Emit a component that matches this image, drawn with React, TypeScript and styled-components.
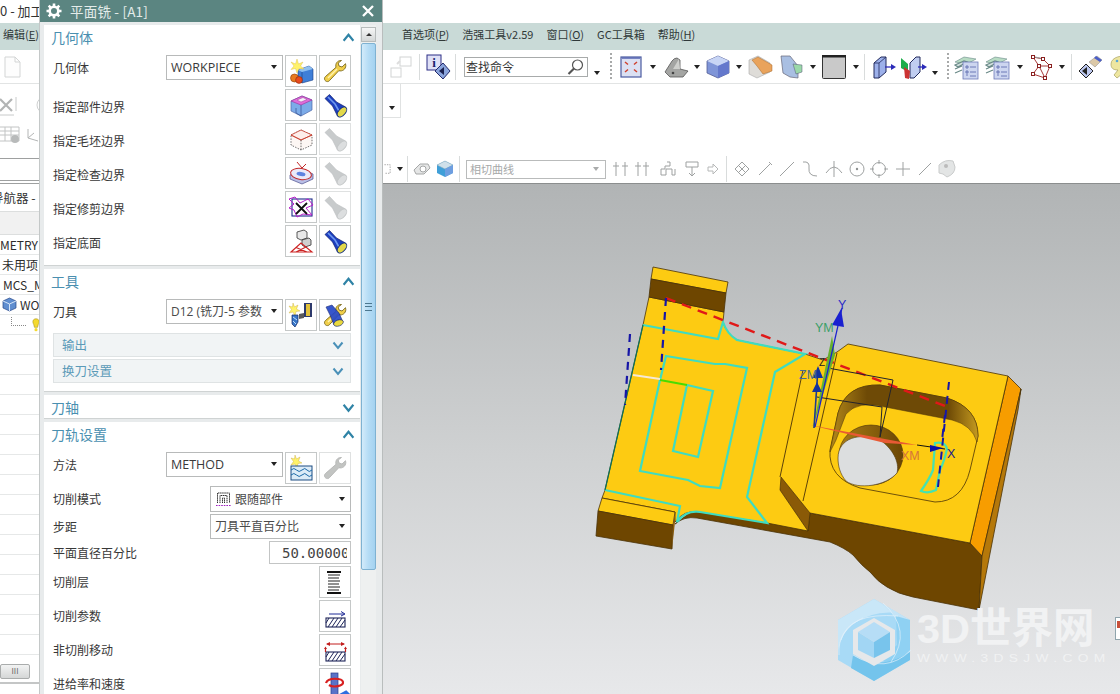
import React from "react";
import styled, { createGlobalStyle } from "styled-components";

const Global = createGlobalStyle`
  html, body { margin: 0; padding: 0; width: 1120px; height: 694px; overflow: hidden; background: #fff; }
  body { font-family: "Noto Sans CJK SC", "Noto Sans", sans-serif; color: #333; }
  * { box-sizing: border-box; }
`;

const Page = styled.div`position: relative; width: 1120px; height: 694px; overflow: hidden; display: flex; flex-direction: column; background: #fff;`;
const TitleBar = styled.div`height: 23px; flex: none; font-size: 13px; line-height: 21px; color: #333; white-space: nowrap; overflow: hidden;`;
const MenuBar = styled.div`height: 27px; flex: none; background: #c9dad7; display: flex; align-items: center; padding: 0 0 5px 3px; font-size: 11px; color: #303838; white-space: nowrap;`;
const MenuGroup = styled.div`display: flex; gap: 13px; margin-left: 363px;`;
const MenuItem = styled.span`
  u { text-underline-offset: 1px; }
`;
const ToolBar = styled.div`height: 34px; flex: none; display: flex; align-items: center; border-bottom: 1px solid #e2e4e4; overflow: hidden;`;
const Slot = styled.div<{ $w: number }>`flex: none; width: ${(p) => p.$w}px; height: 28px; display: flex; align-items: center; justify-content: center; overflow: visible;`;
const Sep = styled.div`flex: none; width: 1px; height: 26px; background: #d9dcdc;`;
const Grip = styled.div<{ $w: number }>`flex: none; width: ${(p) => p.$w}px; height: 28px; display: flex; justify-content: center;
  &::before { content: ""; width: 2px; height: 100%; background: repeating-linear-gradient(to bottom, #a8aaaa 0 2px, transparent 2px 4px); }
`;
const Caret = styled.i`display: block; flex: none; width: 0; height: 0; border-left: 3.5px solid transparent; border-right: 3.5px solid transparent; border-top: 4px solid #222;`;
const LowCaret = styled(Caret)`margin-top: 13px;`;
const SearchBox = styled.div`flex: none; margin-left: 8px; width: 124px; height: 20px; border: 1px solid #a8abab; display: flex; align-items: center; justify-content: space-between; padding: 0 2px 0 1px; font-size: 12px; color: #333;`;
const Ribbon = styled.div`height: 99px; flex: none; display: flex;`;
const RibbonLeft = styled.div`width: 383px; flex: none; display: flex; flex-direction: column; padding-top: 6px;`;
const LeftRow = styled.div`height: 30px; flex: none; display: flex; align-items: center; gap: 4px;`;
const LeftField = styled.div`margin-top: 8px; height: 23px; border-top: 1px solid #9ea0a0; border-bottom: 1px solid #9ea0a0;`;
const RibbonRight = styled.div`flex: 1; display: flex; flex-direction: column; justify-content: space-between;`;
const OverflowBox = styled.div`width: 18px; height: 34px; display: flex; align-items: center; justify-content: center; padding-top: 14px; border-right: 1px solid #e0e2e2; border-bottom: 1px solid #e0e2e2;`;
const FilterBar = styled.div`height: 28px; display: flex; align-items: center;`;
const FilterSelect = styled.div`flex: none; margin-left: 6px; width: 140px; height: 19px; border: 1px solid #b9bbbb; display: flex; align-items: center; justify-content: space-between; padding: 0 6px 0 3px; font-size: 11px; color: #a6a8a8;`;
const GreyCaret = styled(Caret)`border-top-color: #a9abab;`;

const Work = styled.div`flex: 1; display: flex; min-height: 0;`;
const Nav = styled.div`width: 383px; flex: none; display: flex; flex-direction: column; overflow: hidden; border-top: 1px solid #9ea0a0;`;
const NavHead = styled.div`height: 28px; flex: none; font-size: 12.5px; line-height: 28px; border-bottom: 1px solid #dcdede; white-space: nowrap;
  span { margin-left: -9px; display: inline-block; }
`;
const NavCols = styled.div`height: 23px; flex: none; background: #f1f1f1; border-bottom: 1px solid #dcdede;`;
const NavRow = styled.div<{ $pl?: number }>`height: 20px; flex: none; border-bottom: 1px solid #e6e8e8; font-size: 12px; line-height: 19px; display: flex; align-items: center; white-space: nowrap; padding-left: ${(p) => p.$pl ?? 2}px; gap: 3px; color: #2c2c2c;`;
const DotLink = styled.i`display: block; margin-left: 9px; width: 15px; height: 9px; margin-top: -6px; border-left: 1px dotted #888; border-bottom: 1px dotted #888;`;
const HScroll = styled.div`margin-top: 9px; width: 30px; height: 15px; flex: none; border: 1px solid #a9acac; border-radius: 2px; background: linear-gradient(#f2f3f3, #d5d7d7); font-size: 8px; line-height: 12px; text-align: center; color: #666;`;
const NavFoot = styled.div`margin-top: 3px; height: 2px; flex: none; background: #c4c6c6;`;

const Viewport = styled.div`position: relative; flex: 1; border-top: 1px solid #8b8e8e; background: linear-gradient(#b1b4b5 0%, #d0d2d3 55%, #e7e8ea 100%); overflow: hidden;`;
const ModelCanvas = styled.svg`display: block; width: 100%; height: 100%;`;
const Watermark = styled.div`position: absolute; left: 450px; top: 415px; display: flex; gap: 2px; align-items: flex-start; pointer-events: none;`;
const MarkText = styled.div`display: flex; flex-direction: column; padding-top: 7px;`;
const MarkBig = styled.div`font-family: "Liberation Sans", "Noto Sans CJK SC", sans-serif; font-weight: 700; font-size: 41.5px; line-height: 46px; color: #f1f2f3; white-space: nowrap;`;
const MarkSmall = styled.div`font-family: "Liberation Sans", sans-serif; font-size: 11px; line-height: 12px; letter-spacing: 4.3px; color: #f1f2f3; white-space: nowrap; transform: scaleX(1.25); transform-origin: left center;`;
const EdgeThumb = styled.div`position: absolute; right: -3px; top: 433px; width: 8px; height: 23px; background: #fff; border: 1px solid #8fa4ac; &::after { content: ""; display: block; margin: 3px 0 0 1px; width: 5px; height: 7px; background: #c8503a; }`;

const Panel = styled.div`position: absolute; left: 39px; top: 0; width: 344px; height: 694px; background: #e8ebec; display: flex; flex-direction: column; overflow: hidden; border-right: 1px solid #b9bdbd; border-left: 1px solid #c4c8c8;`;
const PanelHead = styled.div`height: 22px; flex: none; background: #5b8581; color: #e4ecea; display: flex; align-items: center; padding: 0 7px 0 6px; font-size: 13.5px; gap: 8px;`;
const PanelTitle = styled.div`flex: 1; letter-spacing: 0.2px;`;
const PanelBody = styled.div`flex: 1; min-height: 0; display: flex; padding: 3px 6px 0 4px; gap: 1px;`;
const Sections = styled.div`width: 316px; flex: none; display: flex; flex-direction: column; gap: 4px;`;
const Section = styled.section<{ $pb?: number }>`background: #fff; box-shadow: 0 1px 0 #cfd3d3; padding-bottom: ${(p) => p.$pb ?? 0}px; flex: none;`;
const SecHead = styled.div<{ $h?: number }>`height: ${(p) => p.$h ?? 30}px; display: flex; align-items: flex-start; justify-content: space-between; padding: 0 5px 0 7px; color: #4a8fb0; font-size: 14px; line-height: 24px;
  svg { margin-top: 6px; }
`;
const Rows = styled.div`display: flex; flex-direction: column; gap: 2px; padding: 0 9px;`;
const Row = styled.div`display: flex; align-items: flex-start;`;
const Label = styled.div<{ $mt?: number; $lh?: number }>`flex: 1; font-size: 12px; line-height: ${(p) => p.$lh ?? 25}px; color: #383838; margin-top: ${(p) => p.$mt ?? 0}px; white-space: nowrap;`;
const Combo = styled.div<{ $w: number; $h?: number }>`flex: none; width: ${(p) => p.$w}px; height: ${(p) => p.$h ?? 25}px; border: 1px solid #b8baba; display: flex; align-items: center; justify-content: space-between; padding: 0 5px 1px 4px; font-family: "Open Sans", "Noto Sans CJK SC", sans-serif; font-size: 12.5px; color: #3a3a3a; white-space: nowrap; overflow: hidden; background: #fff;`;
const ComboText = styled.span`display: flex; align-items: center; gap: 3px; font-size: 12px; color: #4a4a4a; overflow: hidden;`;
const NumField = styled.div`flex: none; width: 82px; height: 23px; border: 1px solid #c3c5c5; padding: 0 3px 0 12px; font-family: "DejaVu Sans Mono", monospace; font-size: 14px; line-height: 22px; color: #444;`;
const NumText = styled.div`overflow: hidden; white-space: nowrap;`;
const IconBtn = styled.div<{ $faded?: boolean }>`flex: none; width: 32px; height: 32px; margin-left: 2px; border: 1px solid ${(p) => (p.$faded ? "#dfe1e1" : "#c5c8c8")}; background: #fff; display: flex; align-items: center; justify-content: center;`;
const Sub = styled.div`margin: 2px 9px 0; height: 24px; background: #f1f4f5; border: 1px solid #dfe3e4; display: flex; align-items: center; justify-content: space-between; padding: 0 6px 1px 8px; color: #5b9ab8; font-size: 12.5px;`;
const ScrollTrack = styled.div`width: 15px; flex: none; display: flex; flex-direction: column; gap: 1px; padding-top: 2px; background: #eef0f0;`;
const ScrollBtn = styled.div`height: 15px; flex: none; border: 1px solid #b7bcbc; background: linear-gradient(#f6f7f7, #d3d6d6); display: flex; align-items: center; justify-content: center; &::before { content: ""; border-left: 3px solid transparent; border-right: 3px solid transparent; border-bottom: 3px solid #333; }`;
const ScrollThumb = styled.div`height: 527px; flex: none; border: 1px solid #7fb2d2; border-radius: 2px; background: linear-gradient(to right, #d3ebfa, #b5dcf5 50%, #a4d2f0); display: flex; align-items: center; justify-content: center; &::before { content: ""; width: 7px; height: 6px; border-top: 1px solid #4d7890; border-bottom: 1px solid #4d7890; background: linear-gradient(#4d7890,#4d7890) center/100% 1px no-repeat; }`;

type GProps = { s?: number; children?: React.ReactNode; view?: string };
const Glyph = styled.svg`display: block; flex: none; overflow: visible;`;
const G = ({ s = 26, view = "0 0 26 26", children }: GProps) => (
  <Glyph width={s} height={s} viewBox={view} fill="none">{children}</Glyph>
);

const Chevron = ({ up, color = "#2f83a6", s = 13, w = 2 }: { up?: boolean; color?: string; s?: number; w?: number }) => (
  <G s={s} view="0 0 12 12">
    <path d={up ? "M1.5 9 L6 3.5 L10.5 9" : "M1.5 3.5 L6 9 L10.5 3.5"} stroke={color} strokeWidth={w} />
  </G>
);
const Wrench = ({ gray, dual }: { gray?: boolean; dual?: boolean }) => (
  <G>
    <path d="M19 2.5c-3.5 0-6 3-5 6.8L3.4 18.6c-1.9 1.7-.6 5 2 5 .8 0 1.5-.3 2-.9L16.800 12.700c3.600 1 7-1.500 7-5.200 0-.7-.1-1.200-.3-1.800L20 9l-3-1-.8-3 3.300-2.500z"
      fill={gray ? "#c2c4c2" : "#f1cf4a"} stroke={gray ? "#b5b7b5" : "#7a6a20"} strokeWidth="0.9" />
    {!gray && <path d="M6 20 L15 11" stroke="#fff3b0" strokeWidth="1.4" />}
    {dual && <path d="M4 5 L10 3 L17 11 L21 20 L12 23 L8 13Z" fill="#2648c8" stroke="#10206a" strokeWidth=".6" opacity=".92" />}
    {dual && <ellipse cx="16.500" cy="21" rx="5" ry="3" transform="rotate(-20 16.500 21)" fill="#ead93e" stroke="#10206a" strokeWidth=".6" />}
  </G>
);
const Torch = ({ gray }: { gray?: boolean }) => (
  <G>
    <path d="M3 6.500 L7.500 2.500 L14.500 10 L23.500 15 L15.500 24 L10.500 14Z" fill={gray ? "#c8cbcc" : "#1c3fc0"} stroke={gray ? "#bfc2c3" : "#101e6c"} strokeWidth=".7" />
    {!gray && <path d="M6 5 L13 12 L17 19" stroke="#6f98ee" strokeWidth="1.6" />}
    <ellipse cx="20" cy="20" rx="6" ry="3.400" transform="rotate(-48 20 20)" fill={gray ? "#dcdedf" : "#e2d84a"} stroke={gray ? "#c4c7c8" : "#15307e"} strokeWidth="1" />
  </G>
);
const IcoNew = () => (
  <G>
    <path d="M10 12 L21 8 L25 11 L25 22 L14 25 L10 22Z" fill="#3f7fd8" stroke="#1a3e84" strokeWidth=".6" />
    <path d="M10 12 L21 8 L25 11 L14 14Z" fill="#8fc0f0" />
    <path d="M14 14 L14 25" stroke="#1a3e84" strokeWidth=".6" />
    <path d="M9 1 L10.500 6 L15 4 L12.500 8 L16 11 L11 10.500 L9 15 L7.500 10.500 L3 11.500 L6 8 L3 4 L7.500 6Z" fill="#fff26a" stroke="#d8b840" strokeWidth=".4" />
    <circle cx="6.500" cy="20" r="4" fill="#e8791e" stroke="#8a3a08" strokeWidth=".6" />
    <circle cx="11" cy="22" r="3.400" fill="#e84a1e" stroke="#8a2a08" strokeWidth=".6" />
  </G>
);
const IcoPart = () => (
  <G>
    <path d="M3 9 L14 4 L24 8 L24 18 L13 24 L3 19Z" fill="#7cabe8" stroke="#4f68a8" strokeWidth=".7" />
    <path d="M3 9 L14 4 L24 8 L13 13Z" fill="#e06cd8" stroke="#a03aa0" strokeWidth=".7" />
    <path d="M9 8 L15 5.500 L19 7.500 L13 10Z" fill="#f3f0f8" stroke="#a03aa0" strokeWidth=".5" />
    <path d="M13 13 L13 24 M8 16 L8 21 L13 24" stroke="#3c5a9c" strokeWidth=".8" />
  </G>
);
const IcoBlank = () => (
  <G>
    <path d="M3 9 L13 4 L24 9 L24 19 L13 24 L3 19Z" fill="#fdf7f4" stroke="#333" strokeWidth=".7" strokeDasharray="1.500 1.300" />
    <path d="M3 9 L13 4 L24 9 L13 14Z M13 14 L3 9 M13 14 L24 9" fill="#fdeeea" stroke="#c83c2c" strokeWidth=".8" />
    <path d="M13 14 L13 24" stroke="#333" strokeWidth=".7" strokeDasharray="1.500 1.300" />
  </G>
);
const IcoCheck = () => (
  <G>
    <path d="M2 15 L13 9 L25 14 L25 19 L14 24 L2 19Z" fill="#b9bfe6" stroke="#4c4f8c" strokeWidth=".7" />
    <ellipse cx="13" cy="14" rx="10.500" ry="5.500" transform="rotate(8 13 14)" fill="#e9e9f8" stroke="#c22828" strokeWidth="1" />
    <ellipse cx="13" cy="14" rx="4.500" ry="2" transform="rotate(8 13 14)" fill="#5d83e0" />
    <path d="M9 2 L14 8 M18 4 L14 8" stroke="#c22828" strokeWidth="1" />
  </G>
);
const IcoTrim = () => (
  <G>
    <rect x="4" y="5" width="20" height="17" fill="#fff" stroke="#1d2a8a" strokeWidth="1.100" />
    <path d="M1 5 L7 3 L12 9 L20 5 L25 11 L18 14 L24 21 L15 20 L9 23 L6 16 L1 14 L6 10Z" fill="none" stroke="#b61cc8" strokeWidth="1" />
    <path d="M8 9 L19 20 M19 9 L8 20" stroke="#111" strokeWidth="1.800" />
  </G>
);
const IcoFloor = () => (
  <G>
    <path d="M9 4 L16 2 L19 4 L19 10 L13 12 L9 10Z" fill="#e8e8e8" stroke="#333" strokeWidth=".8" />
    <path d="M14 12 L21 10 L23 12 L23 17 L17 19 L14 17Z" fill="#cfcfcf" stroke="#333" strokeWidth=".8" />
    <path d="M3 24 L13 15 L24 24Z M3 24 L24 24 M8 19.500 L19 24 M18 19 L8 24" stroke="#cc2323" strokeWidth="1.100" />
  </G>
);
const IcoTool = () => (
  <G>
    <path d="M5 1 L6.500 5 L10 3 L8.500 7 L12 9 L8 9.500 L7 14 L5 10 L1 11 L3.500 7.500 L1 4 L4.500 5Z" fill="#fff26a" stroke="#c7a63a" strokeWidth=".4" />
    <rect x="16" y="1" width="8" height="14" fill="#2d3a6c" />
    <rect x="18" y="2" width="4" height="12" fill="#e2c23a" />
    <path d="M4 13 L10 13 L10 20 L7 25 L4 22Z" fill="#3876c8" stroke="#142a66" strokeWidth=".7" />
    <path d="M5 15 L9 18 M5 19 L8 22" stroke="#cde6ff" strokeWidth=".9" />
    <path d="M11 12 L16 11 L16 16 L11 17Z" fill="#5a5a5a" />
  </G>
);
const IcoMethod = () => (
  <G>
    <path d="M7 0 L8.500 4 L12 2 L10.500 6 L14 8 L10 8.500 L9 13 L7 9 L3 10 L5.500 6.500 L3 3 L6.500 4Z" fill="#fff26a" stroke="#c7a63a" strokeWidth=".4" />
    <rect x="3" y="11" width="21" height="14" fill="#dcebf7" stroke="#1c4d82" strokeWidth="1" />
    <path d="M3 15 Q6 12 8.500 15 T14 15 T19 15 T24 15 M3 20 Q6 17 8.500 20 T14 20 T19 20 T24 20" stroke="#1c6aa8" strokeWidth="1" fill="none" />
  </G>
);
const IcoLevels = () => (
  <G>
    {[6, 9, 12, 15, 18, 21].map((y) => <path key={y} d={`M6 ${y} H${y % 2 ? 17 : 18}`} stroke="#222" strokeWidth="1" />)}
    <path d="M5 3 H19 M5 24 H19" stroke="#111" strokeWidth="1.800" />
  </G>
);
const Hatch = () => (
  <>
    <rect x="4" y="15" width="19" height="9" fill="#fff" stroke="#1d2458" strokeWidth="1.100" />
    <path d="M6 24 L12 15 M10 24 L16 15 M14 24 L20 15 M18 24 L23 17 M4 20 L7 15" stroke="#1d2458" strokeWidth="1" />
  </>
);
const IcoParams = () => (
  <G>
    <Hatch />
    <path d="M7 11 H22 M19 8.500 L23 11 L19 13" stroke="#1e2a96" strokeWidth="1" fill="none" />
  </G>
);
const IcoMove = () => (
  <G>
    <Hatch />
    <path d="M5 7 H22" stroke="#c21f1f" strokeWidth="1" />
    <path d="M8 5 L4 7 L8 9Z M19 5 L23 7 L19 9Z" fill="#c21f1f" />
    <path d="M3.500 15 V11 M23.500 15 V11" stroke="#c21f1f" strokeWidth="1.200" />
    <path d="M3.500 9.500 L2 12 H5Z M23.500 9.500 L22 12 H25Z" fill="#c21f1f" />
  </G>
);
const IcoFeed = () => (
  <G>
    <rect x="9" y="2" width="7" height="23" fill="#5a73c8" stroke="#2b3c8c" strokeWidth=".7" />
    <path d="M4 12 C6 6 20 7 21 11 C22 15 11 17 7 14" stroke="#d82020" strokeWidth="2.200" fill="none" />
    <path d="M15 26 L24 21 L27 24" stroke="#2f6ee0" strokeWidth="3" fill="none" />
  </G>
);
const IcoGear = () => (
  <G s={16} view="0 0 16 16">
    <circle cx="8" cy="8" r="4.300" stroke="#fff" strokeWidth="2.600" />
    <path d="M8 .5 V3 M8 13 V15.500 M.5 8 H3 M13 8 H15.500 M2.700 2.700 L4.500 4.500 M11.500 11.500 L13.300 13.300 M13.300 2.700 L11.500 4.500 M4.500 11.500 L2.700 13.300" stroke="#fff" strokeWidth="2.600" />
  </G>
);
const IcoClose = () => (
  <G s={14} view="0 0 14 14"><path d="M2 2 L12 12 M12 2 L2 12" stroke="#fff" strokeWidth="2.300" /></G>
);
const IcoFollow = () => (
  <G s={17} view="0 0 17 17">
    <path d="M2.500 13 V3 H14.500 V13 M5 13 V5.500 H12 V13 M7.500 13 V8 H9.500 V13" stroke="#2c2c2c" strokeWidth="1" strokeDasharray="1.500 .6" />
    <path d="M1 15.500 H16" stroke="#a021c0" strokeWidth="1" strokeDasharray="1.600 1" />
  </G>
);

/* toolbar drawings */
const TSquares = () => (<G s={24} view="0 0 24 24"><rect x="11" y="2" width="11" height="9" fill="#fff" stroke="#d2d4d4" /><rect x="2" y="13" width="10" height="9" fill="#fff" stroke="#d2d4d4" /><path d="M8 9 L11 6" stroke="#ddd" strokeWidth="2" /></G>);
const TInfo = () => (<G s={26}><rect x="2" y="1" width="14" height="15" fill="#dfe0f6" stroke="#2c2f86" /><text x="9" y="13" fontFamily="Liberation Serif" fontWeight="700" fontSize="13" textAnchor="middle" fill="#20236e">i</text><path d="M18 9 L25 17 L18 25 L10 17Z" fill="#8aa4dc" stroke="#232a6c" /><path d="M19 13 L14 17 L19 21Z" fill="#1a2050" /></G>);
const TLens = () => (<G s={18} view="0 0 18 18"><circle cx="10.500" cy="7" r="5" fill="#fff" stroke="#555" strokeWidth="1.200" /><path d="M7 10.500 L1.500 16" stroke="#555" strokeWidth="2.200" /></G>);
const TFit = () => (<G s={24} view="0 0 24 24"><rect x="2" y="2" width="20" height="20" fill="#dbe0f2" stroke="#4a5aa0" strokeWidth="1.200" /><path d="M3 3 H21" stroke="#5665b0" strokeWidth="1.500" /><path d="M6 7 L9 9.500 M18 7 L15 9.500 M6 17 L9 14.500 M18 17 L15 14.500" stroke="#d0402c" strokeWidth="1.500" /></G>);
const TBracket = () => (<G s={26}><path d="M2 18 L9 7 Q11 4 14 4 L17 6 L17 15 L25 17 L20 23 L7 23Z" fill="#a4a5a3" stroke="#555" strokeWidth=".8" /><path d="M10 15 L16 5 L17 15Z" fill="#cfd0cd" /><circle cx="10" cy="19" r="1.300" fill="#444" /></G>);
const TCube = () => (<G s={26}><path d="M2 7 L13 2 L24 7 L24 19 L13 24 L2 19Z" fill="#7f95d8" stroke="#545d94" strokeWidth=".8" /><path d="M2 7 L13 2 L24 7 L13 12Z" fill="#c8d5f5" /><path d="M13 12 L13 24 L24 19 L24 7Z" fill="#6478cc" /></G>);
const TOrange = () => (<G s={26}><path d="M1 6 L10 2 L22 9 L22 18 L9 24 L1 20Z" fill="#dedcd8" stroke="#aaa" strokeWidth=".6" /><path d="M4 6 L10 3 L24 11 L24 17 L15 20 L9 12Z" fill="#e9a35c" stroke="#a86a2c" strokeWidth=".5" /></G>);
const TWedge = () => (<G s={26}><path d="M3 2 L12 2 L20 12 L20 24 L12 23 L5 19Z" fill="#a9bfe2" stroke="#667" strokeWidth=".7" /><path d="M15 10 L24 11 L24 18 L18 20Z" fill="#9ad8a8" stroke="#557" strokeWidth=".5" /></G>);
const TDisplay = () => (<G s={26}><rect x="1.500" y="1.500" width="23" height="23" rx="1" fill="#c9c9c9" stroke="#333" strokeWidth="1" /><rect x="1" y="1" width="24" height="2.500" fill="#222" /></G>);
const TPlate = () => (<G s={26}><path d="M3 9 L10 3 L15 3 L15 18 L8 24 L3 24Z" fill="#9cb0ea" stroke="#222a5c" strokeWidth="1" /><path d="M8 9 L8 24 M3 9 L8 9 L15 3" stroke="#222a5c" strokeWidth=".8" /><path d="M14 13 H22" stroke="#2a2ab8" strokeWidth="1.300" /><path d="M20 10 L25 13 L20 16Z" fill="#2a2ab8" /></G>);
const TPlate2 = () => (<G s={26}><path d="M9 9 L15 3 L19 3 L19 18 L13 24 L9 24Z" fill="#c0cdf0" stroke="#222a5c" strokeWidth="1" /><path d="M0 4 L7 10 L7 18 L0 14Z" fill="#1cae4a" /><path d="M3 13 L9 17 L8 25 L4 24Z" fill="#cc3333" /><path d="M17 13 H23" stroke="#2a2ab8" strokeWidth="1.300" /><path d="M21 10 L26 13 L21 16Z" fill="#2a2ab8" /></G>);
const TLayers = () => (<G s={26}><path d="M1 8 L10 3 L22 5 L13 10Z" fill="#b8dcc4" stroke="#6a8a88" strokeWidth=".6" /><path d="M1 11 L10 7 L13 8 L4 13Z M1 15 L8 12 M1 19 L8 16" stroke="#6a8a88" strokeWidth="1.200" fill="#d4e2e0" /><rect x="9" y="8" width="15" height="17" fill="#cdd6f0" stroke="#6e7cb8" strokeWidth=".8" /><path d="M12 12 h2 v2 h-2z M16 13 h6 M12 17 h2 v2 h-2z M16 18 h6 M12 21 h2 M16 22 h6" stroke="#5362a8" strokeWidth=".8" /></G>);
const TNet = () => (<G s={26}><path d="M5 3 L11 12 L5 20 L17 24 L22 12 L15 5 Z M11 12 L17 24 M11 12 L22 12" stroke="#a83a3a" strokeWidth="1" /><path d="M7 3 L16 5" stroke="#999" />{[[5, 3], [15, 5], [22, 12], [11, 12], [5, 20], [17, 24]].map(([x, y]) => <rect key={`${x}${y}`} x={x - 1.5} y={y - 1.5} width="3" height="3" fill="#fff" stroke="#8a2020" />)}</G>);
const TPen = () => (<G s={26}><path d="M12 8 L20 2 L25 6 L18 13 Z" fill="#dcc9a8" stroke="#888" strokeWidth=".5" /><path d="M19 2 L25 6 L23 8 L17 4Z" fill="#4a5fc8" /><path d="M2 17 L9 10 L16 17 L9 24Z" fill="#bcc7ee" stroke="#222" strokeWidth="1" /><path d="M10 13 L5 17 L10 21Z" fill="#222" /></G>);
const TPalette = () => (<G s={26}><path d="M3 10 C3 3 15 0 21 4 C26 7 23 13 18 12 L14 20 L9 24 L6 21 L10 16 C5 16 3 14 3 10Z" fill="#eee6a0" stroke="#a8a060" strokeWidth=".7" /><circle cx="9" cy="7" r="1.300" fill="#58a8d8" /><circle cx="14" cy="5" r="1.300" fill="#58c878" /></G>);

const F = ({ d, c = "#9ea1a1" }: { d: string; c?: string }) => (
  <G s={18} view="0 0 18 18"><path d={d} stroke={c} strokeWidth="1" fill="none" /></G>
);
const FilterEye = () => (<G s={18} view="0 0 18 18"><path d="M1 10 L7 4 L15 4 L17 8 L11 14 L3 14Z" fill="#e5e6e6" stroke="#a5a7a7" /><circle cx="10" cy="9" r="3" fill="#fff" stroke="#a5a7a7" /></G>);
const FilterCube = () => (<G s={18} view="0 0 18 18"><path d="M1 5 L9 1 L17 5 L17 13 L9 17 L1 13Z" fill="#3f9fd8" /><path d="M1 5 L9 1 L17 5 L9 9Z" fill="#cfe0ea" stroke="#8ab" strokeWidth=".5" /><path d="M9 9 L17 5 L17 13 L9 17Z" fill="#6e9ee0" /></G>);

const Model = () => {
  const brown = "#6e4600";
  const yellow = "#fdcb12";
  const line = "#4a3208";
  return (
    <ModelCanvas viewBox="383 184 737 510" preserveAspectRatio="none">
      <defs>
        <linearGradient id="wall" x1="0" x2="1" y1="0" y2="0">
          <stop offset="0" stopColor="#b58a1a" />
          <stop offset=".25" stopColor="#6e4a06" />
          <stop offset=".8" stopColor="#6e4a06" />
          <stop offset="1" stopColor="#c49a20" />
        </linearGradient>
        <linearGradient id="holeWall" x1="0" x2="1" y1="0" y2="0">
          <stop offset="0" stopColor="#a87c14" />
          <stop offset="1" stopColor="#6b4604" />
        </linearGradient>
      </defs>

      {/* underside of the whole part */}
      <path d="M675 524 Q684 516 697 518 L830 542 Q845 548 853 555 Q862 566 870 572 Q878 582 887 587 Q898 594 913 597 L979 610 L982 556 L970 543 L810 513 L700 505Z" fill={brown} stroke={line} strokeWidth=".8" />
      <path d="M1008 376 L1021 389 L982 556 L970 543Z" fill="#f79d00" stroke={line} strokeWidth=".8" />
      <path d="M1021 389 L1018 410 L979 610 L982 556Z" fill="#b5780a" stroke={line} strokeWidth=".8" />
      {/* top face, one surface */}
      <path d="M649 297 L724 312 L723 322 Q726 333 737 340 L805 354 L823 360 L837 352 L848 344 L1008 376 L970 543 L810 513 L808 531 L767 523 L697 512 Q684 510 675 522 L675 512 L602 498 L605 490 L643 325Z" fill={yellow} stroke={line} strokeWidth=".8" />
      <path d="M803 370 L780 477 M837 353 L803 501" stroke={line} strokeWidth=".9" />
      <path d="M781 477 L810 513 L808 531 L780 490Z" fill="#8a5a07" stroke={line} strokeWidth=".7" />
      {/* upper tab */}
      <path d="M653 267 L728 282 L726 293 L651 279Z" fill={yellow} stroke={line} strokeWidth=".8" />
      <path d="M651 279 L726 293 L724 312 L649 297Z" fill={brown} stroke={line} strokeWidth=".8" />
      {/* lower tab */}
      <path d="M602 498 L675 512 L673 525 L598 511Z" fill={yellow} stroke={line} strokeWidth=".8" />
      <path d="M598 511 L673 525 L672 549 L596 536Z" fill={brown} stroke={line} strokeWidth=".8" />
      <path d="M673 525 L675 513 L675 522 L672 549Z" fill="#8a5a07" />
      {/* pocket */}
      <path d="M880 385 L947 398 Q978 408 978 436 L970 470 Q962 502 935 502 L860 488 Q828 478 830 450 L838 413 Q846 384 880 385Z" fill={yellow} stroke={line} strokeWidth=".8" />
      <path d="M880 385 L947 398 Q978 408 978 436 L977 442 Q972 425 952 420 L885 407 Q858 400 846 414 L836 440 L830 452 L838 413 Q846 384 880 385Z" fill="url(#wall)" stroke={line} strokeWidth=".5" />
      <ellipse cx="871" cy="455" rx="32" ry="30" fill="url(#holeWall)" stroke={line} strokeWidth=".6" />
      <path d="M838 458 C838 438 860 432 880 440 C892 448 900 462 897 473 C886 486 858 490 846 481 C840 474 838 466 838 458Z" fill="#dcdedf" stroke={line} strokeWidth=".6" />

      {/* tool path */}
      <g fill="none" stroke="#3fdcc0" strokeWidth="2.200">
        <path d="M643 325 L718 339 L723 322 Q727 334 737 340 L805 354 L775 372 L747 497 L767 523 L700 512 Q686 510 677 522 L680 506 L605 490" />
        <path d="M666 356 L715 364 L725 364 L747 368 L720 488 L700 486 L688 480 L640 471 L660 380Z" />
        <path d="M687 385 L713 391 L698 457 L673 451Z" />
        <path d="M935 443 Q945 441 947 449 Q944 462 940 470 L936 490 Q928 494 921 491 Q930 478 933 470Z" stroke="#45e2b0" />
      </g>
      <path d="M605 490 L643 325" stroke="#0e7058" strokeWidth="1.200" />
      <path d="M660 380 L687 385" stroke="#49dc00" strokeWidth="2" />
      <path d="M633 375 L660 379" stroke="#f6e9d6" strokeWidth="2" />
      <path d="M666 298 L945 406" stroke="#e01818" strokeWidth="2.400" strokeDasharray="10 7" />
      <path d="M666 298 L661 370 M630 334 L625 405" stroke="#1616a6" strokeWidth="2.200" strokeDasharray="8 6" />
      <path d="M949 382 L938 487 M945 415 L942 440" stroke="#1616a6" strokeWidth="2" strokeDasharray="8 6" />

      {/* csys */}
      <path d="M828 368 L893 380 L880 437 M817 397 L882 407 L880 437" stroke="#23232b" strokeWidth="1" fill="none" />
      <path d="M813 427 L832 336 L835 355Z" fill="#66b030" />
      <path d="M810 425 L917 445 L885 443Z" fill="#e85a34" />
      <path d="M815 427 L842 308" stroke="#1a20d0" strokeWidth="1.200" />
      <path d="M841 309 L832 325 L844 327Z" fill="#1a20d0" />
      <path d="M814 428 L818 368" stroke="#1c3d8c" strokeWidth="1.600" />
      <path d="M818 366 L813 378 L823 378Z M817 382 L812 392 L822 392Z" fill="#14349c" />
      <path d="M917 445 L945 449" stroke="#111" strokeWidth="1" />
      <path d="M930 445 L943 448 L930 452Z" fill="#0c10a8" />
      <g fontFamily="Liberation Sans, sans-serif" fontSize="12.500">
        <text x="838" y="309" fill="#2a2ac8">Y</text>
        <text x="815" y="332" fill="#3a9f68">YM</text>
        <text x="799" y="379" fill="#476a92">ZM</text>
        <text x="819" y="366" fill="#222" fontSize="10">Z</text>
        <text x="901" y="460" fill="#d5763c">XM</text>
        <text x="947" y="458" fill="#20208c">X</text>
      </g>
    </ModelCanvas>
  );
};

const Logo = () => (
  <G s={82} view="833 599 80 82">
    <path d="M873 599 L909 620 L909 660 L873 681 L837 660 L837 620Z" fill="#a8daf6" />
    <path d="M837 620 L873 599 L897 613 Q872 610 852 624 Q840 634 837 650Z" fill="#c9e7f8" />
    <path d="M873 599 L909 620 L909 642 Q905 625 895 617 Q885 606 873 599Z" fill="#c4e4f7" />
    <path d="M895 616 L909 620 L909 650 Q902 662 888 664 L880 660 L896 645 Z" fill="#8fd1f3" />
    <path d="M852 655 Q878 672 909 652 L909 660 L873 681 L850 668Z" fill="#74c4ec" />
    <path d="M840 640 Q848 612 897 616 M882 603 Q912 630 890 662 M910 650 Q885 675 852 655 M838 655 Q836 630 862 618" stroke="#e2f1fb" strokeWidth=".7" />
    <path d="M873 618 L894 630 L894 654 L873 666 L852 654 L852 630Z" fill="#e6e8ea" />
    <path d="M873 622 L889 632 L873 642 L857 632Z" fill="#b6ddf6" />
    <path d="M857 632 L873 642 L873 658 L857 650Z" fill="#a2d6f4" />
    <path d="M889 632 L873 642 L873 658 L889 650Z" fill="#78c4ec" />
  </G>
);

const Row2 = ({ label, mt, lh, combo, icons }: { label: string; mt?: number; lh?: number; combo?: React.ReactNode; icons: React.ReactNode }) => (
  <Row>
    <Label $mt={mt} $lh={lh}>{label}</Label>
    {combo}
    {icons}
  </Row>
);

export default function App() {
  return (
    <Page>
      <Global />
      <TitleBar>0 - 加工</TitleBar>
      <MenuBar>
        <MenuItem>编辑(<u>E</u>)</MenuItem>
        <MenuGroup>
          <MenuItem>首选项(<u>P</u>)</MenuItem>
          <MenuItem>浩强工具v2.59</MenuItem>
          <MenuItem>窗口(<u>O</u>)</MenuItem>
          <MenuItem>GC工具箱</MenuItem>
          <MenuItem>帮助(<u>H</u>)</MenuItem>
        </MenuGroup>
      </MenuBar>
      <ToolBar>
        <Slot $w={24}><G s={22} view="0 0 22 22"><path d="M4 1 H14 L19 6 V21 H4Z" fill="#fdfdfd" stroke="#d3d5d5" /><path d="M14 1 V6 H19" stroke="#d3d5d5" /></G></Slot>
        <Slot $w={359} />
        <Slot $w={36}><TSquares /></Slot><Sep />
        <Slot $w={35}><TInfo /></Slot><Sep />
        <SearchBox>查找命令<TLens /></SearchBox>
        <Slot $w={18}><LowCaret /></Slot>
        <Grip $w={10} />
        <Slot $w={29}><TFit /></Slot>
        <Slot $w={16}><Caret /></Slot>
        <Slot $w={29}><TBracket /></Slot>
        <Slot $w={14}><Caret /></Slot>
        <Slot $w={27}><TCube /></Slot>
        <Slot $w={15}><Caret /></Slot>
        <Slot $w={29}><TOrange /></Slot>
        <Slot $w={31}><TWedge /></Slot>
        <Slot $w={14}><Caret /></Slot>
        <Slot $w={28}><TDisplay /></Slot>
        <Slot $w={16}><Caret /></Slot><Sep />
        <Slot $w={38}><TPlate /></Slot>
        <Slot $w={22}><TPlate2 /></Slot>
        <Slot $w={20}><LowCaret /></Slot>
        <Grip $w={5} />
        <Slot $w={34}><TLayers /></Slot>
        <Slot $w={28}><TLayers /></Slot>
        <Slot $w={16}><Caret /></Slot>
        <Slot $w={25}><TNet /></Slot>
        <Slot $w={18}><Caret /></Slot><Sep />
        <Slot $w={36}><TPen /></Slot>
        <Slot $w={26}><TPalette /></Slot>
      </ToolBar>
      <Ribbon>
        <RibbonLeft>
          <LeftRow>
            <G s={28} view="0 0 28 28"><path d="M0 8 L12 20 M12 8 L0 20" stroke="#b2b4b4" strokeWidth="2.200" /><path d="M16 6 V20 M0 24 H14" stroke="#c8caca" /></G>
            <G s={18} view="0 0 18 18"><circle cx="13" cy="9" r="8" stroke="#cfd1d1" /></G>
          </LeftRow>
          <LeftRow>
            <G s={22} view="0 0 22 22"><path d="M0 3 H19 V17 H0 M0 7 H19 M0 11 H19 M5 3 V17 M11 3 V17" stroke="#c2c4c4" /><circle cx="15" cy="15" r="4" fill="#b8baba" /></G>
            <G s={14} view="0 0 14 14"><path d="M2 1 V10 L12 13 M2 10 L8 5" stroke="#b4b6b6" /></G>
          </LeftRow>
          <LeftField />
        </RibbonLeft>
        <RibbonRight>
          <OverflowBox><Caret /></OverflowBox>
          <FilterBar>
            <Slot $w={10}><G s={10} view="0 0 10 14"><path d="M0 1 H8 V13 H0" stroke="#888" strokeDasharray="2 1.500" /></G></Slot>
            <Slot $w={14}><Caret /></Slot><Sep />
            <Slot $w={27}><FilterEye /></Slot>
            <Slot $w={20}><FilterCube /></Slot>
            <Slot $w={4} /><Sep />
            <FilterSelect>相切曲线<GreyCaret /></FilterSelect>
            <Slot $w={30}><F d="M4 2 V16 M13 2 V16 M1 6 H7 M10 6 H16" /></Slot>
            <Slot $w={14}><F d="M4 2 V16 M12 2 V16 M1 6 H7 M9 6 H15" /></Slot>
            <Slot $w={34}><F d="M9 2 H12 V6 H7 V9 H3 V15 H8 V9 H14 V15 H17 V9" /></Slot>
            <Slot $w={16}><F d="M3 2 H15 V7 H3Z M9 7 V16 M6 13 L9 16 L12 13" /></Slot>
            <Slot $w={26}><F d="M4 7 H9 V4 L14 9 L9 14 V11 H4Z" c="#b6b8b8" /></Slot><Sep />
            <Slot $w={30}><F d="M9 2 L16 9 L9 16 L2 9Z M5 5 L13 13 M13 5 L5 13" /></Slot>
            <Slot $w={16}><F d="M3 15 L15 3 M13 2 L16 5" /></Slot>
            <Slot $w={28}><F d="M2 16 L16 2 M7 11 L11 7" /></Slot>
            <Slot $w={18}><F d="M2 2 Q9 1 8 8 Q7 16 16 16" /></Slot>
            <Slot $w={30}><F d="M9 1 V17 M1 13 Q9 1 17 13" /></Slot>
            <Slot $w={16}><G s={18} view="0 0 18 18"><circle cx="9" cy="9" r="7" stroke="#9ea1a1" /><circle cx="9" cy="9" r="1.200" fill="#8e9191" /></G></Slot>
            <Slot $w={28}><G s={18} view="0 0 18 18"><circle cx="9" cy="9" r="6.500" stroke="#9ea1a1" /><path d="M9 0 V4 M9 14 V18 M0 9 H4 M14 9 H18" stroke="#9ea1a1" /></G></Slot>
            <Slot $w={20}><F d="M9 2 V16 M2 9 H16" /></Slot>
            <Slot $w={24}><F d="M3 15 L15 3" /></Slot>
            <Slot $w={20}><G s={20} view="0 0 20 20"><path d="M2 6 Q8 0 16 2 L18 8 Q18 15 10 18 Q6 14 2 14Z" fill="#e3e5e5" stroke="#c9cbcb" /><circle cx="9" cy="7" r="2" fill="#bbb" /></G></Slot>
          </FilterBar>
        </RibbonRight>
      </Ribbon>
      <Work>
        <Nav>
          <NavHead><span>导航器 -</span></NavHead>
          <NavCols />
          <NavRow $pl={0}>METRY</NavRow>
          <NavRow>未用项</NavRow>
          <NavRow $pl={3}>MCS_M</NavRow>
          <NavRow>
            <G s={15} view="0 0 15 15"><path d="M1 4 L7.500 1 L14 4 L14 11 L7.500 14 L1 11Z" fill="#5f8ed0" stroke="#26488a" strokeWidth=".7" /><path d="M1 4 L7.500 7 L14 4 M7.500 7 V14" stroke="#d4e4f8" /></G>
            WO
          </NavRow>
          <NavRow>
            <DotLink />
            <G s={14} view="0 0 14 18"><path d="M7 1 C11 1 12 5 10 8 L9 12 H5 L4 8 C2 5 3 1 7 1Z" fill="#f4d92e" stroke="#a08a10" strokeWidth=".7" /><circle cx="7" cy="15" r="2" fill="#f4d92e" /></G>
          </NavRow>
          {Array.from({ length: 16 }, (_, i) => <NavRow key={i} />)}
          <HScroll>III</HScroll>
          <NavFoot />
        </Nav>
        <Viewport>
          <Model />
          <Watermark>
            <Logo />
            <MarkText>
              <MarkBig>3D世界网</MarkBig>
              <MarkSmall>WWW.3DSJW.COM</MarkSmall>
            </MarkText>
          </Watermark>
          <EdgeThumb />
        </Viewport>
      </Work>

      <Panel>
        <PanelHead>
          <IcoGear />
          <PanelTitle>平面铣 - [A1]</PanelTitle>
          <IcoClose />
        </PanelHead>
        <PanelBody>
          <Sections>
            <Section $pb={8}>
              <SecHead>几何体<Chevron up /></SecHead>
              <Rows>
                <Row2 label="几何体" combo={<Combo $w={117}>WORKPIECE<Caret /></Combo>} icons={<><IconBtn><IcoNew /></IconBtn><IconBtn><Wrench /></IconBtn></>} />
                <Row2 label="指定部件边界" mt={5} icons={<><IconBtn><IcoPart /></IconBtn><IconBtn><Torch /></IconBtn></>} />
                <Row2 label="指定毛坯边界" mt={5} icons={<><IconBtn><IcoBlank /></IconBtn><IconBtn $faded><Torch gray /></IconBtn></>} />
                <Row2 label="指定检查边界" mt={5} icons={<><IconBtn><IcoCheck /></IconBtn><IconBtn $faded><Torch gray /></IconBtn></>} />
                <Row2 label="指定修剪边界" mt={5} icons={<><IconBtn><IcoTrim /></IconBtn><IconBtn $faded><Torch gray /></IconBtn></>} />
                <Row2 label="指定底面" mt={5} icons={<><IconBtn><IcoFloor /></IconBtn><IconBtn><Torch /></IconBtn></>} />
              </Rows>
            </Section>
            <Section $pb={8}>
              <SecHead>工具<Chevron up /></SecHead>
              <Rows>
                <Row2 label="刀具" combo={<Combo $w={117}><ComboText>D12 (铣刀-5 参数</ComboText><Caret /></Combo>} icons={<><IconBtn><IcoTool /></IconBtn><IconBtn><Wrench dual /></IconBtn></>} />
              </Rows>
              <Sub>输出<Chevron color="#4a90b8" s={12} /></Sub>
              <Sub>换刀设置<Chevron color="#4a90b8" s={12} /></Sub>
            </Section>
            <Section>
              <SecHead $h={23}>刀轴<Chevron /></SecHead>
            </Section>
            <Section>
              <SecHead>刀轨设置<Chevron up /></SecHead>
              <Rows>
                <Row2 label="方法" combo={<Combo $w={117}>METHOD<Caret /></Combo>} icons={<><IconBtn><IcoMethod /></IconBtn><IconBtn $faded><Wrench gray /></IconBtn></>} />
                <Row2 label="切削模式" combo={<Combo $w={141} $h={26}><ComboText><IcoFollow />跟随部件</ComboText><Caret /></Combo>} icons={null} />
                <Row2 label="步距" combo={<Combo $w={141}><ComboText>刀具平直百分比</ComboText><Caret /></Combo>} icons={null} />
                <Row2 label="平面直径百分比" lh={23} combo={<NumField><NumText>50.00000</NumText></NumField>} icons={null} />
                <Row2 label="切削层" mt={3} icons={<IconBtn><IcoLevels /></IconBtn>} />
                <Row2 label="切削参数" mt={3} icons={<IconBtn><IcoParams /></IconBtn>} />
                <Row2 label="非切削移动" mt={3} icons={<IconBtn><IcoMove /></IconBtn>} />
                <Row2 label="进给率和速度" mt={3} icons={<IconBtn><IcoFeed /></IconBtn>} />
              </Rows>
            </Section>
          </Sections>
          <ScrollTrack>
            <ScrollBtn />
            <ScrollThumb />
          </ScrollTrack>
        </PanelBody>
      </Panel>
    </Page>
  );
}
